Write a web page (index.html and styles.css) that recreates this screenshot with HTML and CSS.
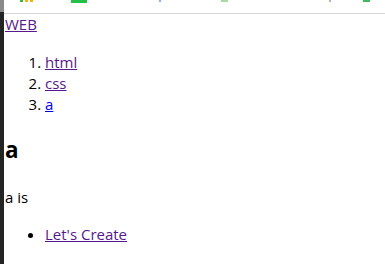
FILE: index.html
```html
<!DOCTYPE html>
<html>
<head>
<meta charset="utf-8">
<link rel="stylesheet" href="styles.css">
</head>
<body>
<div class="frame">
  <div class="edge"></div>
  <div class="page">
    <div class="topbar">
      <span class="bit green-s b1"></span>
      <span class="bit orange-s b2"></span>
      <span class="bit orange-s b3"></span>
      <span class="bit green-l b4"></span>
      <span class="bit blue-s b5"></span>
      <span class="bit lgreen b6"></span>
      <span class="bit mixed b7"></span>
      <span class="bit green-m b8"></span>
    </div>
    <div class="content">
      <a class="visited" href="#web">WEB</a>
      <ol class="toc">
        <li><a class="visited" href="#html">html</a></li>
        <li><a class="visited" href="#css">css</a></li>
        <li><a class="fresh" href="#a">a</a></li>
      </ol>
      <h2 class="title">a</h2>
      <p class="desc">a is</p>
      <ul class="links">
        <li><a class="visited" href="#create">Let's Create</a></li>
      </ul>
    </div>
  </div>
</div>
</body>
</html>
```
FILE: styles.css
```css
html, body {
  margin: 0;
  padding: 0;
  background: #ffffff;
}
body {
  font-family: "Open Sans", "Noto Sans", sans-serif;
  font-size: 15px;
  line-height: 21px;
  color: #000;
  width: 385px;
  height: 264px;
  overflow: hidden;
}
.frame {
  display: flex;
  height: 264px;
}
.edge {
  width: 4px;
  flex: none;
  background: linear-gradient(#8a8a8a 0, #8a8a8a 12px, #242424 12px);
}
.page {
  flex: 1;
  min-width: 0;
}
.topbar {
  height: 13px;
  border-bottom: 1px solid #d6d6d6;
  display: flex;
  align-items: flex-start;
}
.bit {
  display: block;
  height: 2px;
}
.green-s { background: #3cb54a; width: 3px; }
.orange-s { background: #f5b400; width: 3px; }
.green-l { background: #22c045; width: 16px; height: 3px; }
.blue-s { background: #8ab4f8; width: 2px; }
.lgreen { background: #a6dca8; width: 7px; }
.mixed { background: linear-gradient(90deg, #f0b060 50%, #8ab4f8 50%); width: 2px; }
.green-m { background: #44b860; width: 7px; }
.b1 { margin-left: 16px; }
.b2 { margin-left: 2px; }
.b3 { margin-left: 2px; }
.b4 { margin-left: 38px; }
.b5 { margin-left: 72px; }
.b6 { margin-left: 60px; }
.b7 { margin-left: 101px; }
.b8 { margin-left: 32px; }
.content {
  padding-left: 1px;
}
a.visited { color: #551a8b; }
a.fresh { color: #0000ee; }
.toc {
  margin: 17px 0 0 0;
  padding-left: 40px;
}
.title {
  font-size: 22.5px;
  line-height: 30px;
  font-weight: bold;
  margin: 20px 0 0 0;
}
.desc {
  margin: 22px 0 0 0;
}
.links {
  margin: 16px 0 0 0;
  padding-left: 40px;
  list-style: disc;
}
```
